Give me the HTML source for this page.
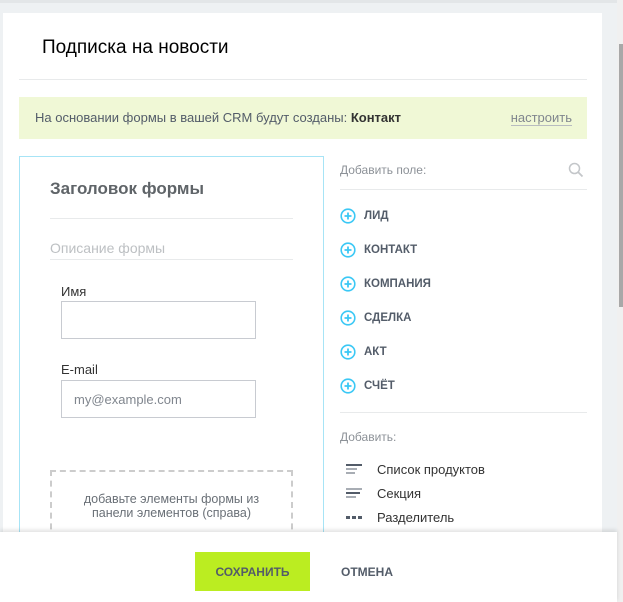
<!DOCTYPE html>
<html><head><meta charset="utf-8"><style>
*{box-sizing:border-box;margin:0;padding:0}
body{width:623px;height:602px;overflow:hidden;background:#eef1f3;font-family:"Liberation Sans",Arial,sans-serif;position:relative}
.topl{position:absolute;left:0;top:0;width:623px;height:3px;background:#e3e6e8}
.panel{position:absolute;left:3px;top:13px;width:599px;height:530px;background:#fff}
.sb{position:absolute;left:617px;top:0;width:6px;height:602px;background:#f0f0f0}
.thumb{position:absolute;left:619px;top:44px;width:4px;height:263px;background:#a8a8a8}
.abs{position:absolute}
h1{position:absolute;left:42px;top:37px;font-size:19px;font-weight:normal;color:#000}
.hr{position:absolute;height:1px;background:#e8eaeb}
.note{position:absolute;left:19px;top:97px;width:568px;height:42px;background:#f0f8d6;font-size:13px;color:#535c69;padding:13px 0 0 16px}
.note b{color:#333}
.note .s{position:absolute;right:15px;top:13px;color:#80868e;border-bottom:1px solid #b8bcc0;line-height:15px}
.left{position:absolute;left:19px;top:156px;width:305px;height:400px;border:1px solid #a7e4f6;border-bottom:none}
.t{position:absolute;font-size:13px}
.inp{position:absolute;left:61px;width:195px;height:38px;border:1px solid #c8cbd1}
.item{position:absolute;left:340px;font-size:11.5px;font-weight:bold;color:#535c69}
.item svg{position:absolute;left:0;top:-2px}
.item span{position:absolute;left:24px;top:0;white-space:nowrap}
.foot{position:absolute;left:0;top:532px;width:617px;height:70px;background:#fff;box-shadow:0 -2px 4px rgba(0,0,0,.12)}
.btn{position:absolute;left:195px;top:20px;width:115px;height:39px;background:#bbed21;font-size:12px;font-weight:bold;color:#535c69;text-align:center;line-height:40px}
.cancel{position:absolute;left:341px;top:20px;font-size:12px;font-weight:bold;color:#535c69;line-height:40px}
</style></head><body>
<div class="topl"></div>
<div class="panel"></div>
<div class="sb"></div><div class="thumb"></div>
<h1>Подписка на новости</h1>
<div class="hr" style="left:19px;top:79px;width:568px"></div>
<div class="note">На основании формы в вашей CRM будут созданы: <b>Контакт</b><span class="s">настроить</span></div>
<div class="left"></div>
<div class="t" style="left:50px;top:179px;font-size:17px;font-weight:bold;color:#5f6468">Заголовок формы</div>
<div class="hr" style="left:50px;top:218px;width:243px"></div>
<div class="t" style="left:50px;top:240px;color:#bdc0c3;font-size:14px">Описание формы</div>
<div class="hr" style="left:50px;top:259px;width:243px"></div>
<div class="t" style="left:61px;top:284px;color:#333">Имя</div>
<div class="inp" style="top:301px"></div>
<div class="t" style="left:61px;top:362px;color:#333">E-mail</div>
<div class="inp" style="top:380px"><span class="t" style="left:12px;top:11px;color:#80868e">my@example.com</span></div>
<div class="abs" style="left:50px;top:470px;width:243px;height:70px;border:2px dashed #ccc;border-bottom:none"></div>
<div class="t" style="left:50px;top:492px;width:243px;text-align:center;color:#6a7077;font-size:12.5px;line-height:14px">добавьте элементы формы из<br>панели элементов (справа)</div>
<div class="t" style="left:340px;top:163px;color:#8c9197;font-size:12px">Добавить поле:</div>
<svg class="abs" style="left:568px;top:162px" width="16" height="16" viewBox="0 0 16 16"><circle cx="6.5" cy="6.5" r="5" fill="none" stroke="#c3c6c9" stroke-width="1.5"/><path d="M10 10L14.5 14.5" stroke="#c3c6c9" stroke-width="1.8"/></svg>
<div class="hr" style="left:340px;top:189px;width:247px"></div>
<div class="item" style="top:210px"><svg width="16" height="16" viewBox="0 0 16 16"><circle cx="8" cy="8" r="6.8" fill="none" stroke="#3bc8f5" stroke-width="1.6"/><path d="M8 4.5V11.5M4.5 8H11.5" stroke="#3bc8f5" stroke-width="1.8"/></svg><span>ЛИД</span></div>
<div class="item" style="top:244px"><svg width="16" height="16" viewBox="0 0 16 16"><circle cx="8" cy="8" r="6.8" fill="none" stroke="#3bc8f5" stroke-width="1.6"/><path d="M8 4.5V11.5M4.5 8H11.5" stroke="#3bc8f5" stroke-width="1.8"/></svg><span>КОНТАКТ</span></div>
<div class="item" style="top:278px"><svg width="16" height="16" viewBox="0 0 16 16"><circle cx="8" cy="8" r="6.8" fill="none" stroke="#3bc8f5" stroke-width="1.6"/><path d="M8 4.5V11.5M4.5 8H11.5" stroke="#3bc8f5" stroke-width="1.8"/></svg><span>КОМПАНИЯ</span></div>
<div class="item" style="top:312px"><svg width="16" height="16" viewBox="0 0 16 16"><circle cx="8" cy="8" r="6.8" fill="none" stroke="#3bc8f5" stroke-width="1.6"/><path d="M8 4.5V11.5M4.5 8H11.5" stroke="#3bc8f5" stroke-width="1.8"/></svg><span>СДЕЛКА</span></div>
<div class="item" style="top:346px"><svg width="16" height="16" viewBox="0 0 16 16"><circle cx="8" cy="8" r="6.8" fill="none" stroke="#3bc8f5" stroke-width="1.6"/><path d="M8 4.5V11.5M4.5 8H11.5" stroke="#3bc8f5" stroke-width="1.8"/></svg><span>АКТ</span></div>
<div class="item" style="top:380px"><svg width="16" height="16" viewBox="0 0 16 16"><circle cx="8" cy="8" r="6.8" fill="none" stroke="#3bc8f5" stroke-width="1.6"/><path d="M8 4.5V11.5M4.5 8H11.5" stroke="#3bc8f5" stroke-width="1.8"/></svg><span>СЧЁТ</span></div>
<div class="hr" style="left:340px;top:412px;width:247px"></div>
<div class="t" style="left:340px;top:430px;color:#8c9197;font-size:12px">Добавить:</div>
<div class="abs" style="left:346px;top:464px;width:16px;height:2px;background:#535c69"></div>
<div class="abs" style="left:346px;top:468px;width:11px;height:2px;background:#a8adb4"></div>
<div class="abs" style="left:346px;top:472px;width:9px;height:2px;background:#a8adb4"></div>
<div class="t" style="left:377px;top:462px;color:#333">Список продуктов</div>
<div class="abs" style="left:346px;top:488px;width:16px;height:2px;background:#a8adb4"></div>
<div class="abs" style="left:346px;top:492px;width:14px;height:2px;background:#535c69"></div>
<div class="abs" style="left:346px;top:496px;width:10px;height:2px;background:#a8adb4"></div>
<div class="t" style="left:377px;top:486px;color:#333">Секция</div>
<div class="abs" style="left:346px;top:516px;width:16px;height:3px;background:repeating-linear-gradient(90deg,#535c69 0 4px,transparent 4px 6px)"></div>
<div class="t" style="left:377px;top:510px;color:#333">Разделитель</div>
<div class="foot"><div class="btn">СОХРАНИТЬ</div><div class="cancel">ОТМЕНА</div></div>
</body></html>
